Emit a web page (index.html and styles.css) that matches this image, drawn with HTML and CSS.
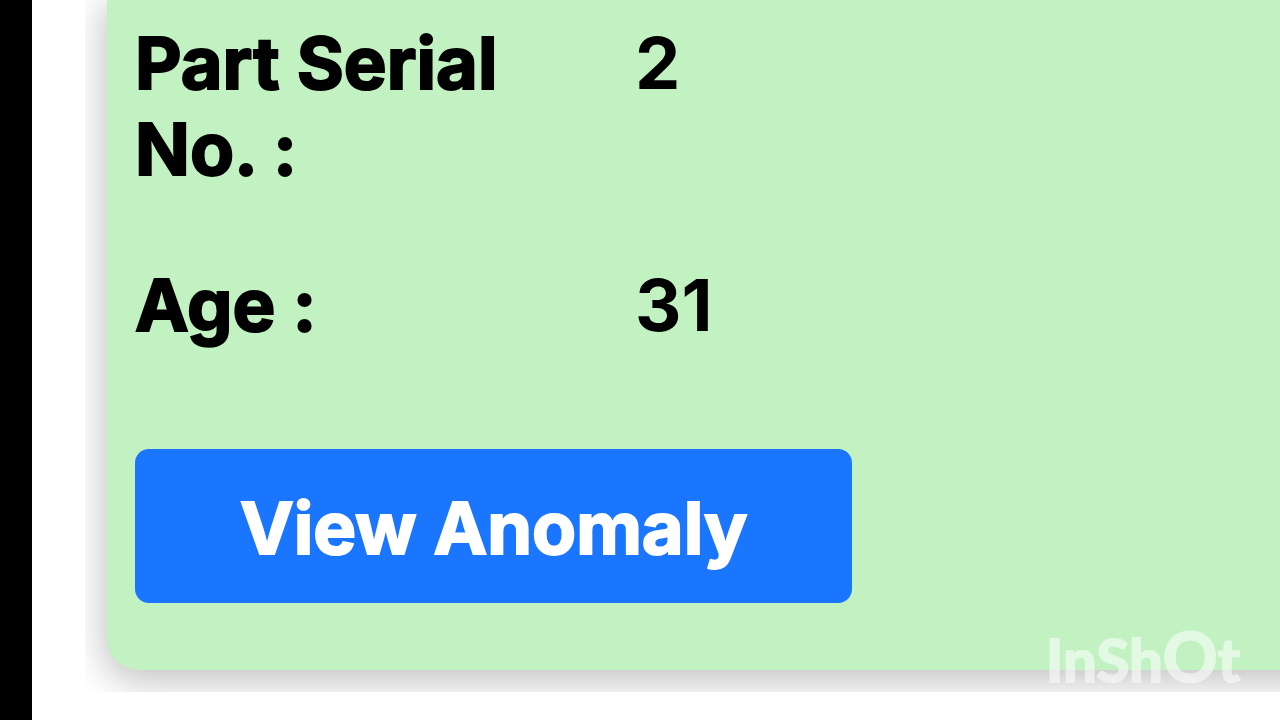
FILE: index.html
```
<!DOCTYPE html>
<html lang="en">
  <head>
    <meta charset="utf-8">
    <title>Part Details</title>
    <link rel="stylesheet" href="styles.css">
  </head>
  <body>
    <main class="panel">
      <div class="card">
        <dl class="details">
          <dt>Part Serial No. :</dt>
          <dd>2</dd>
          <dt>Age :</dt>
          <dd>31</dd>
        </dl>
        <button type="button" class="btn">View Anomaly</button>
      </div>
    </main>
    <div class="watermark">InSh<span class="big">O</span>t</div>
  </body>
</html>
```

FILE: styles.css
```
* { box-sizing: border-box; }

body {
  margin: 0;
  min-height: 100vh;
  border-left: 32px solid #000;
  background: #fff;
  color: #000;
  font-family: Inter, "Liberation Sans", sans-serif;
  font-size: 72px;
  font-weight: 700;
  line-height: 86px;
}

/* clips the card shadow on the left and bottom */
.panel {
  margin-left: 53px;
  padding: 0 0 22px 22px;
  overflow: hidden;
}

.card {
  margin-right: -60px;
  padding: 20px 88px 67px 28px;
  border-radius: 0 0 0 32px;
  background: #c3f2c2;
  box-shadow: 0 8px 36px 4px rgba(0, 0, 0, 0.24);
}

.details {
  display: grid;
  grid-template-columns: 430px 1fr;
  gap: 70px;
  margin: 0 0 101px;
}
.details dt { -webkit-text-stroke: 2px currentColor; }
.details dd { margin: 0; }

.btn {
  display: block;
  padding: 36px 105px 32px;
  border: 0;
  border-radius: 14px;
  background: #1a75ff;
  color: #fff;
  font: inherit;
  -webkit-text-stroke: 2px currentColor;
  white-space: nowrap;
  cursor: pointer;
}

.watermark {
  position: absolute;
  right: 40px;
  bottom: 26px;
  color: #fff;
  opacity: 0.55;
  font-family: Lato, "Liberation Sans", sans-serif;
  font-size: 60px;
  line-height: 70px;
  -webkit-text-stroke: 2px currentColor;
}
.watermark .big { font-size: 68px; }
```
